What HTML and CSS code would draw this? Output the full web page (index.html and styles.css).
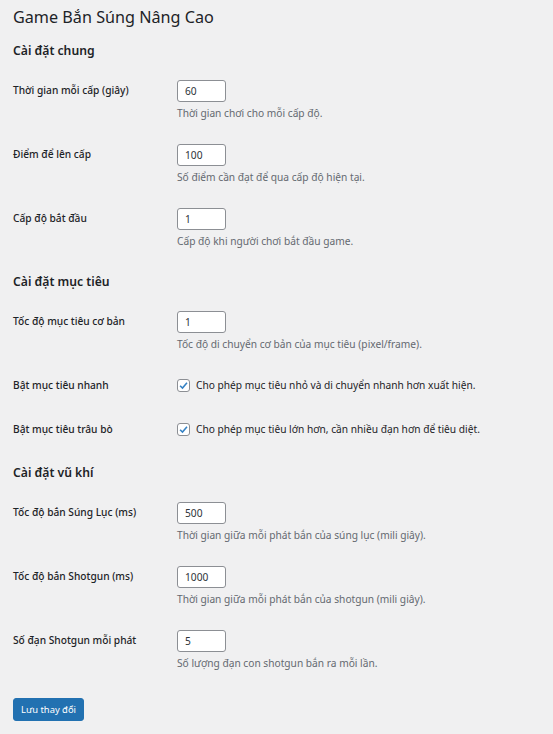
FILE: index.html
```html
<!DOCTYPE html>
<html lang="vi">
<head>
    <meta charset="UTF-8">
    <meta name="viewport" content="width=device-width, initial-scale=1.0">
    <title>Game Bắn Súng Nâng Cao</title>
    <link rel="stylesheet" href="styles.css">
</head>
<body>
    <div class="wrap">
        <h1>Game Bắn Súng Nâng Cao</h1>
        <form>
            <h2>Cài đặt chung</h2>
            <table class="form-table">
                <tr>
                    <th>Thời gian mỗi cấp (giây)</th>
                    <td>
                        <input type="text" class="small-text" value="60">
                        <p class="description">Thời gian chơi cho mỗi cấp độ.</p>
                    </td>
                </tr>
                <tr>
                    <th>Điểm để lên cấp</th>
                    <td>
                        <input type="text" class="small-text" value="100">
                        <p class="description">Số điểm cần đạt để qua cấp độ hiện tại.</p>
                    </td>
                </tr>
                <tr>
                    <th>Cấp độ bắt đầu</th>
                    <td>
                        <input type="text" class="small-text" value="1">
                        <p class="description">Cấp độ khi người chơi bắt đầu game.</p>
                    </td>
                </tr>
            </table>

            <h2>Cài đặt mục tiêu</h2>
            <table class="form-table">
                <tr>
                    <th>Tốc độ mục tiêu cơ bản</th>
                    <td>
                        <input type="text" class="small-text" value="1">
                        <p class="description">Tốc độ di chuyển cơ bản của mục tiêu (pixel/frame).</p>
                    </td>
                </tr>
                <tr class="check-row">
                    <th>Bật mục tiêu nhanh</th>
                    <td>
                        <label class="check">
                            <span class="box"><svg viewBox="0 0 12 12" width="12" height="12"><path d="M2.3 6.2 L4.9 8.8 L9.8 3" fill="none" stroke="#3582c4" stroke-width="1.7"/></svg></span>
                            Cho phép mục tiêu nhỏ và di chuyển nhanh hơn xuất hiện.
                        </label>
                    </td>
                </tr>
                <tr class="check-row">
                    <th>Bật mục tiêu trâu bò</th>
                    <td>
                        <label class="check">
                            <span class="box"><svg viewBox="0 0 12 12" width="12" height="12"><path d="M2.3 6.2 L4.9 8.8 L9.8 3" fill="none" stroke="#3582c4" stroke-width="1.7"/></svg></span>
                            Cho phép mục tiêu lớn hơn, cần nhiều đạn hơn để tiêu diệt.
                        </label>
                    </td>
                </tr>
            </table>

            <h2>Cài đặt vũ khí</h2>
            <table class="form-table">
                <tr>
                    <th>Tốc độ bắn Súng Lục (ms)</th>
                    <td>
                        <input type="text" class="small-text" value="500">
                        <p class="description">Thời gian giữa mỗi phát bắn của súng lục (mili giây).</p>
                    </td>
                </tr>
                <tr>
                    <th>Tốc độ bắn Shotgun (ms)</th>
                    <td>
                        <input type="text" class="small-text" value="1000">
                        <p class="description">Thời gian giữa mỗi phát bắn của shotgun (mili giây).</p>
                    </td>
                </tr>
                <tr>
                    <th>Số đạn Shotgun mỗi phát</th>
                    <td>
                        <input type="text" class="small-text" value="5">
                        <p class="description">Số lượng đạn con shotgun bắn ra mỗi lần.</p>
                    </td>
                </tr>
            </table>

            <p class="submit">
                <button type="button" class="button-primary">Lưu thay đổi</button>
            </p>
        </form>
    </div>
</body>
</html>
```

FILE: styles.css
```css
body {
    margin: 0;
    padding: 0;
    background-color: #f0f0f1;
    color: #1d2327;
    font-family: "Noto Sans", "Open Sans", sans-serif;
    font-size: 10.2px;
}
.wrap {
    padding: 0 13px;
}
h1 {
    margin: 0;
    padding-top: 5px;
    font-size: 16.2px;
    font-weight: 400;
    line-height: 24px;
}
h2 {
    margin: 0;
    font-size: 12.2px;
    font-weight: 600;
    line-height: 17px;
}
.wrap > h1 + form > h2:first-child {
    margin-top: 13px;
}
.form-table + h2 {
    margin-top: 13px;
}
.form-table {
    border-collapse: collapse;
    margin-top: 9px;
}
.form-table th {
    width: 148px;
    padding: 16px 8px 16px 0;
    text-align: left;
    vertical-align: top;
    font-weight: 500;
    line-height: 13px;
}
.form-table td {
    padding: 12px 8px;
    vertical-align: top;
    line-height: 13px;
}
.check-row th,
.check-row td {
    padding-top: 16px;
    padding-bottom: 15px;
}
.small-text {
    display: block;
    box-sizing: border-box;
    width: 49px;
    height: 22px;
    margin: 0;
    padding: 0 7px;
    border: 1px solid #8c8f94;
    border-radius: 3px;
    background: #fff;
    color: #2c3338;
    font-family: inherit;
    font-size: 10.2px;
}
.description {
    margin: 4px 0 0;
    color: #646970;
    line-height: 14px;
}
.check {
    display: flex;
    align-items: center;
    gap: 6px;
}
.box {
    box-sizing: border-box;
    width: 13px;
    height: 13px;
    border: 1px solid #8c8f94;
    border-radius: 3px;
    background: #fff;
    display: flex;
    align-items: center;
    justify-content: center;
}
.box svg {
    width: 11px;
    height: 11px;
}
.submit {
    margin: 16px 0 0;
}
.button-primary {
    height: 23px;
    padding: 0 7px;
    border: 1px solid #2271b1;
    border-radius: 3px;
    background: #2271b1;
    color: #fff;
    font-family: inherit;
    font-size: 9.4px;
    cursor: pointer;
}
```
